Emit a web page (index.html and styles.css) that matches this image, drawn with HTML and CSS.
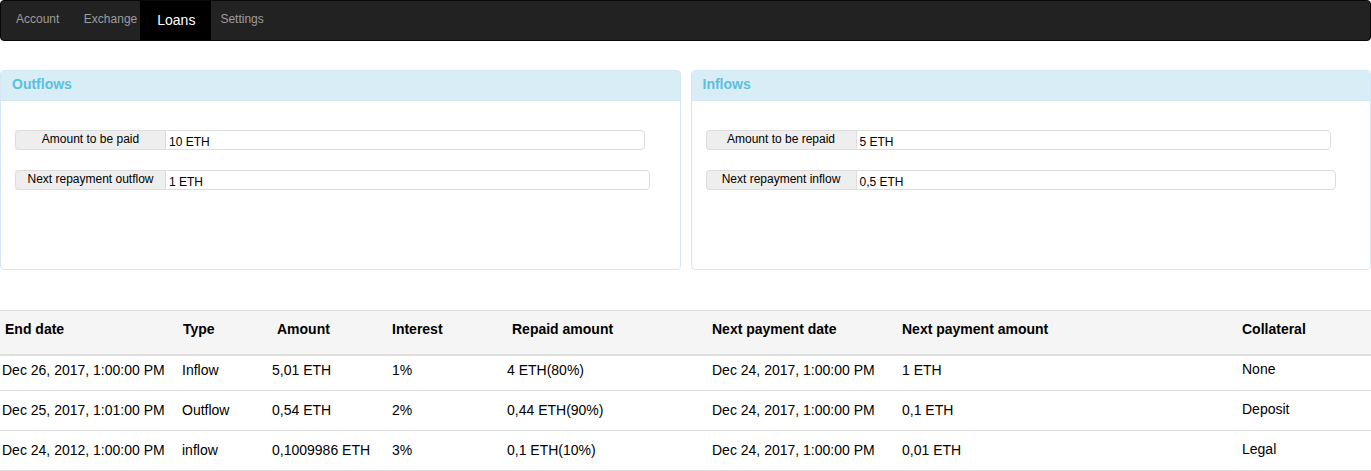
FILE: index.html
```html
<!DOCTYPE html>
<html>
<head>
<meta charset="utf-8">
<link rel="stylesheet" href="styles.css">
</head>
<body>
<nav class="navbar">
  <a class="nav-link first">Account</a>
  <a class="nav-link exchange">Exchange</a>
  <a class="nav-link active">Loans</a>
  <a class="nav-link settings">Settings</a>
</nav>

<div class="panels">
  <section class="panel">
    <div class="panel-heading">Outflows</div>
    <div class="panel-body">
      <div class="input-group">
        <span class="addon">Amount to be paid</span>
        <span class="field w480">10 ETH</span>
      </div>
      <div class="input-group">
        <span class="addon">Next repayment outflow</span>
        <span class="field w485">1 ETH</span>
      </div>
    </div>
  </section>
  <section class="panel">
    <div class="panel-heading">Inflows</div>
    <div class="panel-body">
      <div class="input-group">
        <span class="addon">Amount to be repaid</span>
        <span class="field w475">5 ETH</span>
      </div>
      <div class="input-group">
        <span class="addon">Next repayment inflow</span>
        <span class="field w480">0,5 ETH</span>
      </div>
    </div>
  </section>
</div>

<table class="loans">
  <colgroup>
    <col class="c1"><col class="c2"><col class="c3"><col class="c4">
    <col class="c5"><col class="c6"><col class="c7"><col class="c8">
  </colgroup>
  <thead>
    <tr>
      <th class="h-end">End date</th>
      <th class="h-type">Type</th>
      <th class="h-amount">Amount</th>
      <th>Interest</th>
      <th class="h-repaid">Repaid amount</th>
      <th>Next payment date</th>
      <th>Next payment amount</th>
      <th>Collateral</th>
    </tr>
  </thead>
  <tbody>
    <tr class="row-first">
      <td>Dec 26, 2017, 1:00:00 PM</td>
      <td>Inflow</td>
      <td>5,01 ETH</td>
      <td>1%</td>
      <td>4 ETH(80%)</td>
      <td>Dec 24, 2017, 1:00:00 PM</td>
      <td>1 ETH</td>
      <td class="coll">None</td>
    </tr>
    <tr>
      <td>Dec 25, 2017, 1:01:00 PM</td>
      <td>Outflow</td>
      <td>0,54 ETH</td>
      <td>2%</td>
      <td>0,44 ETH(90%)</td>
      <td>Dec 24, 2017, 1:00:00 PM</td>
      <td>0,1 ETH</td>
      <td class="coll">Deposit</td>
    </tr>
    <tr>
      <td>Dec 24, 2012, 1:00:00 PM</td>
      <td>inflow</td>
      <td>0,1009986 ETH</td>
      <td>3%</td>
      <td>0,1 ETH(10%)</td>
      <td>Dec 24, 2017, 1:00:00 PM</td>
      <td>0,01 ETH</td>
      <td class="coll">Legal</td>
    </tr>
  </tbody>
</table>
</body>
</html>
```

FILE: styles.css
```css
* { box-sizing: border-box; }

body {
  margin: 0;
  font-family: "Liberation Sans", Arial, sans-serif;
  color: #000;
  background: #fff;
}

/* Navbar */
.navbar {
  display: flex;
  align-items: stretch;
  height: 41px;
  background: #222;
  border: 1px solid #080808;
  border-radius: 4px;
}

.nav-link {
  display: flex;
  align-items: center;
  padding: 0 12px 3px 12px;
  font-size: 12px;
  color: #9d9d9d;
  text-decoration: none;
}

.nav-link.first { padding-left: 15px; padding-right: 12.5px; }
.nav-link.exchange { padding-left: 12px; padding-right: 3px; }
.nav-link.active {
  background: #000;
  color: #fff;
  font-size: 14px;
  padding: 0 16px 2px 17px;
}
.nav-link.settings { padding-left: 9px; }

/* Panels */
.panels {
  display: grid;
  grid-template-columns: 1fr 1fr;
  gap: 10px;
  margin-top: 29px;
}

.panel {
  height: 200px;
  border: 1px solid #d3e8f4;
  border-radius: 4px;
  overflow: hidden;
}

.panel-heading {
  height: 30px;
  padding: 5px 11px 0;
  background: #d9edf7;
  border-bottom: 1px solid #d3e8f4;
  color: #5bc0de;
  font-size: 14px;
  font-weight: bold;
}

.panel-body {
  display: flex;
  flex-direction: column;
  gap: 20px;
  padding: 29px 14px 0;
}

.input-group {
  display: flex;
  height: 20px;
  font-size: 12px;
}

.addon {
  width: 150px;
  flex: none;
  background: #eee;
  border: 1px solid #ddd;
  border-right: none;
  border-radius: 4px 0 0 4px;
  text-align: center;
  line-height: 16px;
  color: #000;
}

.field {
  border: 1px solid #ddd;
  border-radius: 0 4px 4px 0;
  padding: 3px 0 0 3px;
  line-height: 17px;
  color: #000;
}

.w475 { width: 475px; }
.w480 { width: 480px; }
.w485 { width: 485px; }

/* Table */
.loans {
  width: 100%;
  margin-top: 40px;
  border-collapse: collapse;
  table-layout: fixed;
  font-size: 14px;
}

.c1 { width: 180px; }
.c2 { width: 90px; }
.c3 { width: 120px; }
.c4 { width: 115px; }
.c5 { width: 205px; }
.c6 { width: 190px; }
.c7 { width: 340px; }
.c8 { width: auto; }

.loans thead tr {
  background: #f5f5f5;
  border-top: 1px solid #ddd;
  border-bottom: 2px solid #ddd;
}

.loans th {
  height: 44px;
  padding: 10px 2px 0;
  text-align: left;
  vertical-align: top;
  font-weight: bold;
  white-space: nowrap;
}

.loans th.h-end { padding-left: 5px; }
.loans th.h-type { padding-left: 3px; }
.loans th.h-amount { padding-left: 7px; }
.loans th.h-repaid { padding-left: 7px; }

.loans tbody tr {
  border-bottom: 1px solid #ddd;
}

.loans td {
  height: 40px;
  padding: 11px 2px 0;
  vertical-align: top;
  white-space: nowrap;
}

.loans tr.row-first td {
  height: 36px;
  padding-top: 6px;
}

.loans td.coll { padding-top: 10px; }
.loans tr.row-first td.coll { padding-top: 5px; }
```
